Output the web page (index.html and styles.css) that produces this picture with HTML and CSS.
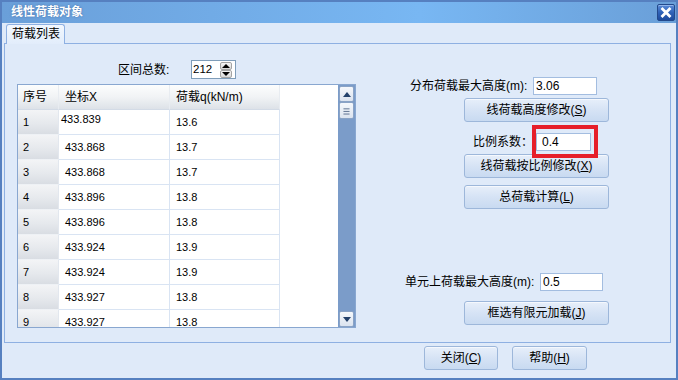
FILE: index.html
```html
<!DOCTYPE html>
<html>
	<head>
		<meta charset="UTF-8">
		<title>线性荷载对象</title>
		<link rel="stylesheet" href="styles.css">
	</head>
	<body>
		<div class="window">
			<div class="title-bar">
				<span class="title-text">线性荷载对象</span>
				<a href="javascript:void(0)" class="close-btn">
					<svg width="18" height="17" viewBox="0 0 18 17"><path d="M5.5 5 L12.5 12 M12.5 5 L5.5 12" stroke="#fff" stroke-width="2.8" stroke-linecap="square"/></svg>
				</a>
			</div>
			<div class="window-body">
				<div class="tab-strip"><div class="tab">荷载列表</div></div>
				<div class="tab-panel">
					<!--左侧列表-->
					<div class="list-col">
						<div class="count-row">
							<label class="count-label">区间总数:</label>
							<div class="spin">
								<span class="spin-value">212</span>
								<span class="spin-btns">
									<span class="spin-btn"><i class="arrow-up"></i></span>
									<span class="spin-btn"><i class="arrow-down"></i></span>
								</span>
							</div>
						</div>
						<div class="grid">
							<div class="grid-body">
								<div class="grid-row grid-head">
									<div class="cell">序号</div>
									<div class="cell">坐标X</div>
									<div class="cell">荷载q(kN/m)</div>
								</div>
								<div class="grid-row"><div class="cell row-head">1</div><div class="cell cell-shift">433.839</div><div class="cell">13.6</div></div>
								<div class="grid-row"><div class="cell row-head">2</div><div class="cell">433.868</div><div class="cell">13.7</div></div>
								<div class="grid-row"><div class="cell row-head">3</div><div class="cell">433.868</div><div class="cell">13.7</div></div>
								<div class="grid-row"><div class="cell row-head">4</div><div class="cell">433.896</div><div class="cell">13.8</div></div>
								<div class="grid-row"><div class="cell row-head">5</div><div class="cell">433.896</div><div class="cell">13.8</div></div>
								<div class="grid-row"><div class="cell row-head">6</div><div class="cell">433.924</div><div class="cell">13.9</div></div>
								<div class="grid-row"><div class="cell row-head">7</div><div class="cell">433.924</div><div class="cell">13.9</div></div>
								<div class="grid-row"><div class="cell row-head">8</div><div class="cell">433.927</div><div class="cell">13.8</div></div>
								<div class="grid-row"><div class="cell row-head">9</div><div class="cell">433.927</div><div class="cell">13.8</div></div>
							</div>
							<div class="vscroll">
								<div class="sb-btn sb-up"><i class="sb-arrow-up"></i></div>
								<div class="sb-thumb">
									<svg width="15" height="16" viewBox="0 0 15 16"><path d="M4 5.5 H11 M4 8.5 H11 M4 11.5 H11" stroke="#4d6384" stroke-width="1"/></svg>
								</div>
								<div class="sb-track"></div>
								<div class="sb-btn sb-down"><i class="sb-arrow-down"></i></div>
							</div>
						</div>
					</div>
					<!--右侧表单-->
					<div class="form-col">
						<div class="form-row row-height">
							<label class="label-height">分布荷载最大高度(m):</label>
							<input type="text" class="text-input input-height" value="3.06">
						</div>
						<button class="btn btn-wide btn-first">线荷载高度修改(<u>S</u>)</button>
						<div class="form-row row-ratio">
							<label class="label-ratio">比例系数：</label>
							<div class="mark-wrap">
								<input type="text" class="text-input input-ratio" value="0.4">
								<span class="red-mark"></span>
							</div>
						</div>
						<button class="btn btn-wide btn-second">线荷载按比例修改(<u>X</u>)</button>
						<button class="btn btn-wide btn-third">总荷载计算(<u>L</u>)</button>
						<div class="form-row row-unit">
							<label class="label-unit">单元上荷载最大高度(m):</label>
							<input type="text" class="text-input input-unit" value="0.5">
						</div>
						<button class="btn btn-wide btn-fourth">框选有限元加载(<u>J</u>)</button>
					</div>
				</div>
				<div class="footer">
					<button class="btn btn-close">关闭(<u>C</u>)</button>
					<button class="btn btn-help">帮助(<u>H</u>)</button>
				</div>
			</div>
		</div>
	</body>
</html>
```

FILE: styles.css
```css
body {
	margin: 0;
	font-family: "Liberation Sans", "Noto Sans CJK SC", sans-serif;
	font-size: 12px;
	color: #000;
}
.window {
	width: 678px;
	height: 380px;
	box-sizing: border-box;
	border: 2px solid #5680c0;
	background: #dfeaf9;
	display: flex;
	flex-direction: column;
	overflow: hidden;
}
.title-bar {
	height: 21px;
	flex: none;
	display: flex;
	align-items: center;
	justify-content: space-between;
	padding: 0 1px 0 9px;
	background: linear-gradient(to right, #6a9fd9, #78b7f3 62%, #6a9fd8);
}
.title-text {
	color: #fff;
	font-weight: bold;
	font-size: 12px;
	line-height: 21px;
	text-shadow: 0 0 2px rgba(30, 60, 110, 0.5);
}
.close-btn {
	display: block;
	width: 18px;
	height: 17px;
	box-sizing: border-box;
	border: 1px solid #23498c;
	border-radius: 2px;
	background: linear-gradient(#5a8ad6, #2f62b8 50%, #1d4a9c);
	box-shadow: inset 0 1px 0 #8fb3ea;
}
.close-btn svg {
	display: block;
	margin: -1px 0 0 -1px;
}
.window-body {
	flex: 1;
	display: flex;
	flex-direction: column;
}
.tab-strip {
	height: 20px;
	flex: none;
	padding-left: 4px;
	display: flex;
}
.tab {
	position: relative;
	z-index: 1;
	margin-top: 1px;
	height: 20px;
	width: 59px;
	box-sizing: border-box;
	border: 1px solid #8eb0e2;
	border-bottom: none;
	border-radius: 3px 3px 0 0;
	background: linear-gradient(#f2f7fe, #e2edfb);
	line-height: 19px;
	font-size: 12px;
	padding-left: 5px;
}
.tab-panel {
	flex: none;
	height: 300px;
	margin: 0 5px 0 2px;
	box-sizing: border-box;
	border: 1px solid #8eb0e2;
	display: flex;
}
.list-col {
	width: 352px;
	flex: none;
	box-sizing: border-box;
	padding: 16px 0 0 12px;
}
.count-row {
	height: 19px;
	display: flex;
	align-items: center;
}
.count-label {
	margin-left: 101px;
	width: 73px;
	line-height: 19px;
	padding-top: 2px;
}
.spin {
	width: 45px;
	height: 19px;
	box-sizing: border-box;
	border: 1px solid #7f9db9;
	background: #fff;
	display: flex;
	align-items: center;
}
.spin-value {
	padding-left: 1px;
	font-size: 11.5px;
	line-height: 17px;
}
.spin-btns {
	margin-left: auto;
	margin-right: 3px;
	display: flex;
	flex-direction: column;
}
.spin-btn {
	width: 12px;
	height: 8px;
	box-sizing: border-box;
	border: 1px solid #a3a3a3;
	border-radius: 2px;
	background: linear-gradient(#f6f6f6, #d8d8d8);
	display: flex;
	align-items: center;
	justify-content: center;
}
.arrow-up {
	border-left: 4px solid transparent;
	border-right: 4px solid transparent;
	border-bottom: 4px solid #000;
}
.arrow-down {
	border-left: 4px solid transparent;
	border-right: 4px solid transparent;
	border-top: 4px solid #000;
}
.grid {
	margin-top: 5px;
	width: 339px;
	height: 244px;
	box-sizing: border-box;
	border: 1px solid #89a7d0;
	background: #fff;
	display: flex;
	overflow: hidden;
}
.grid-body {
	width: 320px;
	flex: none;
	overflow: hidden;
}
.grid-row {
	display: grid;
	grid-template-columns: 41px 111px 110px;
}
.cell {
	height: 25px;
	box-sizing: border-box;
	border-right: 1px solid #d9e4f3;
	border-bottom: 1px solid #d9e4f3;
	padding-left: 6px;
	font-size: 11px;
	line-height: 24px;
	white-space: nowrap;
}
.grid-head .cell {
	background: linear-gradient(#fcfdfd, #f1f3f5 50%, #dde2e8);
	font-size: 12px;
	border-right-color: #e8ecf1;
	border-bottom-color: #d3dbe6;
}
.grid-head .cell:first-child,
.row-head {
	padding-left: 5px;
}
.row-head {
	background: linear-gradient(#f3f4f6, #e6e9ed 55%, #d9dde3);
	border-right-color: #e2e7ee;
	border-bottom-color: #eef1f5;
}
.cell-shift {
	padding-left: 2px;
	line-height: 18px;
}
.vscroll {
	width: 17px;
	flex: none;
	background: #7b9cc9;
	display: flex;
	flex-direction: column;
	padding-top: 1px;
	box-sizing: border-box;
}
.sb-btn,
.sb-thumb {
	margin-left: 1px;
	width: 15px;
	height: 16px;
	box-sizing: border-box;
	border: 1px solid #8aa3c6;
	border-radius: 2px;
	background: linear-gradient(#f5f8fc, #dbe3ef);
	display: flex;
	align-items: center;
	justify-content: center;
}
.sb-thumb {
	height: 17px;
}
.sb-thumb svg {
	display: block;
}
.sb-track {
	flex: 1;
}
.sb-arrow-up {
	border-left: 4px solid transparent;
	border-right: 4px solid transparent;
	border-bottom: 5px solid #23416b;
}
.sb-arrow-down {
	border-left: 4px solid transparent;
	border-right: 4px solid transparent;
	border-top: 5px solid #23416b;
}
.form-col {
	flex: 1;
	display: flex;
	flex-direction: column;
	align-items: flex-start;
}
.form-row {
	display: flex;
	align-items: center;
	height: 18px;
}
.form-row label {
	line-height: 18px;
	white-space: nowrap;
}
.row-height {
	margin-top: 33px;
	padding-left: 53px;
}
.label-height {
	width: 123px;
}
.row-ratio {
	margin-top: 11px;
	padding-left: 116px;
}
.label-ratio {
	width: 63px;
}
.row-unit {
	margin-top: 64px;
	padding-left: 48px;
}
.label-unit {
	width: 135px;
}
.text-input {
	height: 18px;
	box-sizing: border-box;
	border: 1px solid #a3bde0;
	background: #fff;
	padding: 0 0 0 2px;
	font-family: "Liberation Sans", "Noto Sans CJK SC", sans-serif;
	font-size: 12px;
	color: #000;
	outline: none;
}
.input-height {
	width: 64px;
}
.input-ratio {
	width: 55px;
	display: block;
	padding-left: 5px;
}
.input-unit {
	width: 63px;
}
.mark-wrap {
	position: relative;
}
/*红框标注*/
.red-mark {
	position: absolute;
	left: -4px;
	top: -8px;
	right: -7px;
	bottom: -7px;
	border: 4px solid #e61f2a;
	z-index: 2;
}
.btn {
	height: 24px;
	box-sizing: border-box;
	border: 1px solid #9db7da;
	border-radius: 3px;
	background: linear-gradient(#e7effa, #d6e3f5 50%, #c8daf1);
	box-shadow: inset 0 1px 0 #f5f8fd;
	font-family: "Liberation Sans", "Noto Sans CJK SC", sans-serif;
	font-size: 12px;
	color: #000;
	padding: 0;
	line-height: 22px;
}
.btn u {
	text-underline-offset: 1px;
}
.btn-wide {
	width: 145px;
	margin-left: 107px;
}
.btn-first {
	margin-top: 3px;
}
.btn-second {
	margin-top: 3px;
}
.btn-third {
	margin-top: 7px;
}
.btn-fourth {
	margin-top: 10px;
}
.footer {
	flex: 1;
	display: flex;
	justify-content: flex-end;
	align-items: flex-start;
	gap: 14px;
	padding: 3px 89px 0 0;
}
.btn-close {
	width: 74px;
}
.btn-help {
	width: 75px;
}
```
